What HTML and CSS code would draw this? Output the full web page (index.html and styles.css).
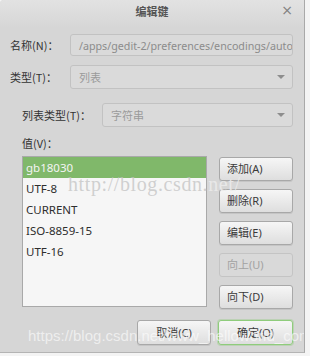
FILE: index.html
```html
<!DOCTYPE html>
<html>
<head>
	<title>编辑键</title>
	<meta charset="utf-8"/>
	<link rel="stylesheet" href="styles.css">
</head>
<body>
	<div class="dialog">
		<div class="titlebar">
			<span class="title">编辑键</span>
			<span class="close">×</span>
		</div>
		<div class="content">
			<div class="row">
				<span class="label">名称(N)：</span>
				<div class="entry">/apps/gedit-2/preferences/encodings/auto_detected</div>
			</div>
			<div class="row row-type">
				<span class="label">类型(T)：</span>
				<div class="combo">列表<span class="arrow"></span></div>
			</div>
			<div class="sub">
				<div class="row">
					<span class="label label-wide">列表类型(T)：</span>
					<div class="combo">字符串<span class="arrow"></span></div>
				</div>
				<div class="value-label">值(V)：</div>
				<div class="value-area">
					<ul class="list">
						<li class="selected">gb18030</li>
						<li>UTF-8</li>
						<li>CURRENT</li>
						<li>ISO-8859-15</li>
						<li>UTF-16</li>
					</ul>
					<div class="side">
						<div class="btn">添加(A)</div>
						<div class="btn">删除(R)</div>
						<div class="btn">编辑(E)</div>
						<div class="btn disabled">向上(U)</div>
						<div class="btn">向下(D)</div>
					</div>
				</div>
			</div>
		</div>
		<div class="actions">
			<div class="btn">取消(C)</div>
			<div class="btn ok">确定(O)</div>
		</div>
		<div class="mark mark-list">http://blog.csdn.<span class="mark-light">net/</span></div>
		<div class="mark mark-bottom">https://blog.csdn.net/www_helloworld_com</div>
	</div>
</body>
</html>
```

FILE: styles.css
```css
html, body{
	margin: 0;
	padding: 0;
}
body{
	width: 310px;
	height: 356px;
	background-color: #f4f4f4;
	font-family: "Noto Sans", "Noto Sans CJK SC", sans-serif;
	font-size: 11px;
	color: #3c3c3c;
	overflow: hidden;
}
.dialog{
	position: relative;
	width: 305px;
	height: 353px;
	background-color: #d6d6d6;
	border-right: 1px solid #a9a9a9;
	border-bottom: 1px solid #b4b4b4;
	border-radius: 4px 0 0 0;
	box-sizing: border-box;
	overflow: hidden;
}
.titlebar{
	height: 28px;
	position: relative;
	background: linear-gradient(#e2e2e2, #d6d6d6);
	display: flex;
	justify-content: center;
	padding-top: 2px;
	box-sizing: border-box;
}
.title{
	font-family: "Noto Sans CJK SC", sans-serif;
	font-weight: bold;
	font-size: 11px;
	line-height: 18px;
	color: #555;
}
.close{
	position: absolute;
	right: 11px;
	top: 1px;
	font-size: 14px;
	line-height: 18px;
	color: #808080;
	font-family: "DejaVu Sans", sans-serif;
}
.content{
	padding: 5px 11px 0 10px;
}
.row{
	display: flex;
	align-items: center;
	height: 24px;
}
.row-type{
	margin-top: 8px;
}
.label{
	width: 60px;
	font-family: "Noto Sans CJK SC", sans-serif;
	color: #333;
}
.label-wide{
	width: 80px;
}
.entry, .combo{
	flex: 1;
	height: 22px;
	line-height: 22px;
	box-sizing: border-box;
	border: 1px solid #c2c2c2;
	border-radius: 3px;
	background-color: #dadada;
	color: #8c8c8c;
	padding-left: 8px;
	white-space: nowrap;
	overflow: hidden;
	font-size: 10.7px;
}
.combo{
	position: relative;
	height: 24px;
	line-height: 22px;
	font-family: "Noto Sans CJK SC", sans-serif;
	font-size: 11px;
	color: #9a9a9a;
}
.arrow{
	position: absolute;
	right: 7px;
	top: 9px;
	width: 0;
	height: 0;
	border-left: 4px solid transparent;
	border-right: 4px solid transparent;
	border-top: 4px solid #8d8d8d;
}
.sub{
	padding-left: 12px;
	margin-top: 14px;
}
.value-label{
	font-family: "Noto Sans CJK SC", sans-serif;
	color: #333;
	margin-top: 7px;
	height: 18px;
	line-height: 18px;
}
.value-area{
	display: flex;
	margin-top: 4px;
}
.list{
	list-style: none;
	margin: 0;
	padding: 0;
	width: 185px;
	height: 151px;
	box-sizing: border-box;
	border: 1px solid #a9a9a9;
	background-color: #f6f6f6;
}
.list li{
	height: 21px;
	line-height: 21px;
	padding-left: 3px;
	font-size: 11.5px;
	color: #2e2e2e;
}
.list .selected{
	background-color: #80b86a;
	color: #f4f4f4;
}
.side{
	margin-left: 12px;
	display: flex;
	flex-direction: column;
	gap: 8px;
	margin-top: 1px;
}
.btn{
	width: 74px;
	height: 24px;
	line-height: 22px;
	box-sizing: border-box;
	border: 1px solid #a8a8a8;
	border-radius: 3px;
	background: linear-gradient(#f6f6f6, #dedede);
	padding-left: 7px;
	font-family: "Noto Sans", "Noto Sans CJK SC", sans-serif;
	font-size: 11px;
	color: #3a3a3a;
	box-shadow: 0 1px 0 rgba(0,0,0,0.08);
}
.btn.disabled{
	background: #d9d9d9;
	border-color: #c4c4c4;
	color: #a2a2a2;
	box-shadow: none;
}
.actions{
	display: flex;
	justify-content: flex-end;
	gap: 7px;
	padding-right: 11px;
	margin-top: 11px;
}
.actions .btn{
	height: 25px;
	padding-left: 0;
	text-align: center;
	line-height: 23px;
}
.actions .ok{
	width: 75px;
	border-color: #8fcc7c;
	box-shadow: 0 0 0 1px rgba(140,200,120,0.35);
}
.mark{
	position: absolute;
	pointer-events: none;
	white-space: nowrap;
}
.mark-list{
	left: 68px;
	top: 173px;
	font-family: "Liberation Serif", serif;
	font-size: 20px;
	color: rgba(195,195,195,0.75);
	letter-spacing: 0.6px;
}
.mark-light{
	color: rgba(235,235,235,0.9);
}
.mark-bottom{
	left: 28px;
	top: 327px;
	font-family: "Liberation Sans", sans-serif;
	font-size: 15px;
	color: rgba(255,255,255,0.6);
}
```
